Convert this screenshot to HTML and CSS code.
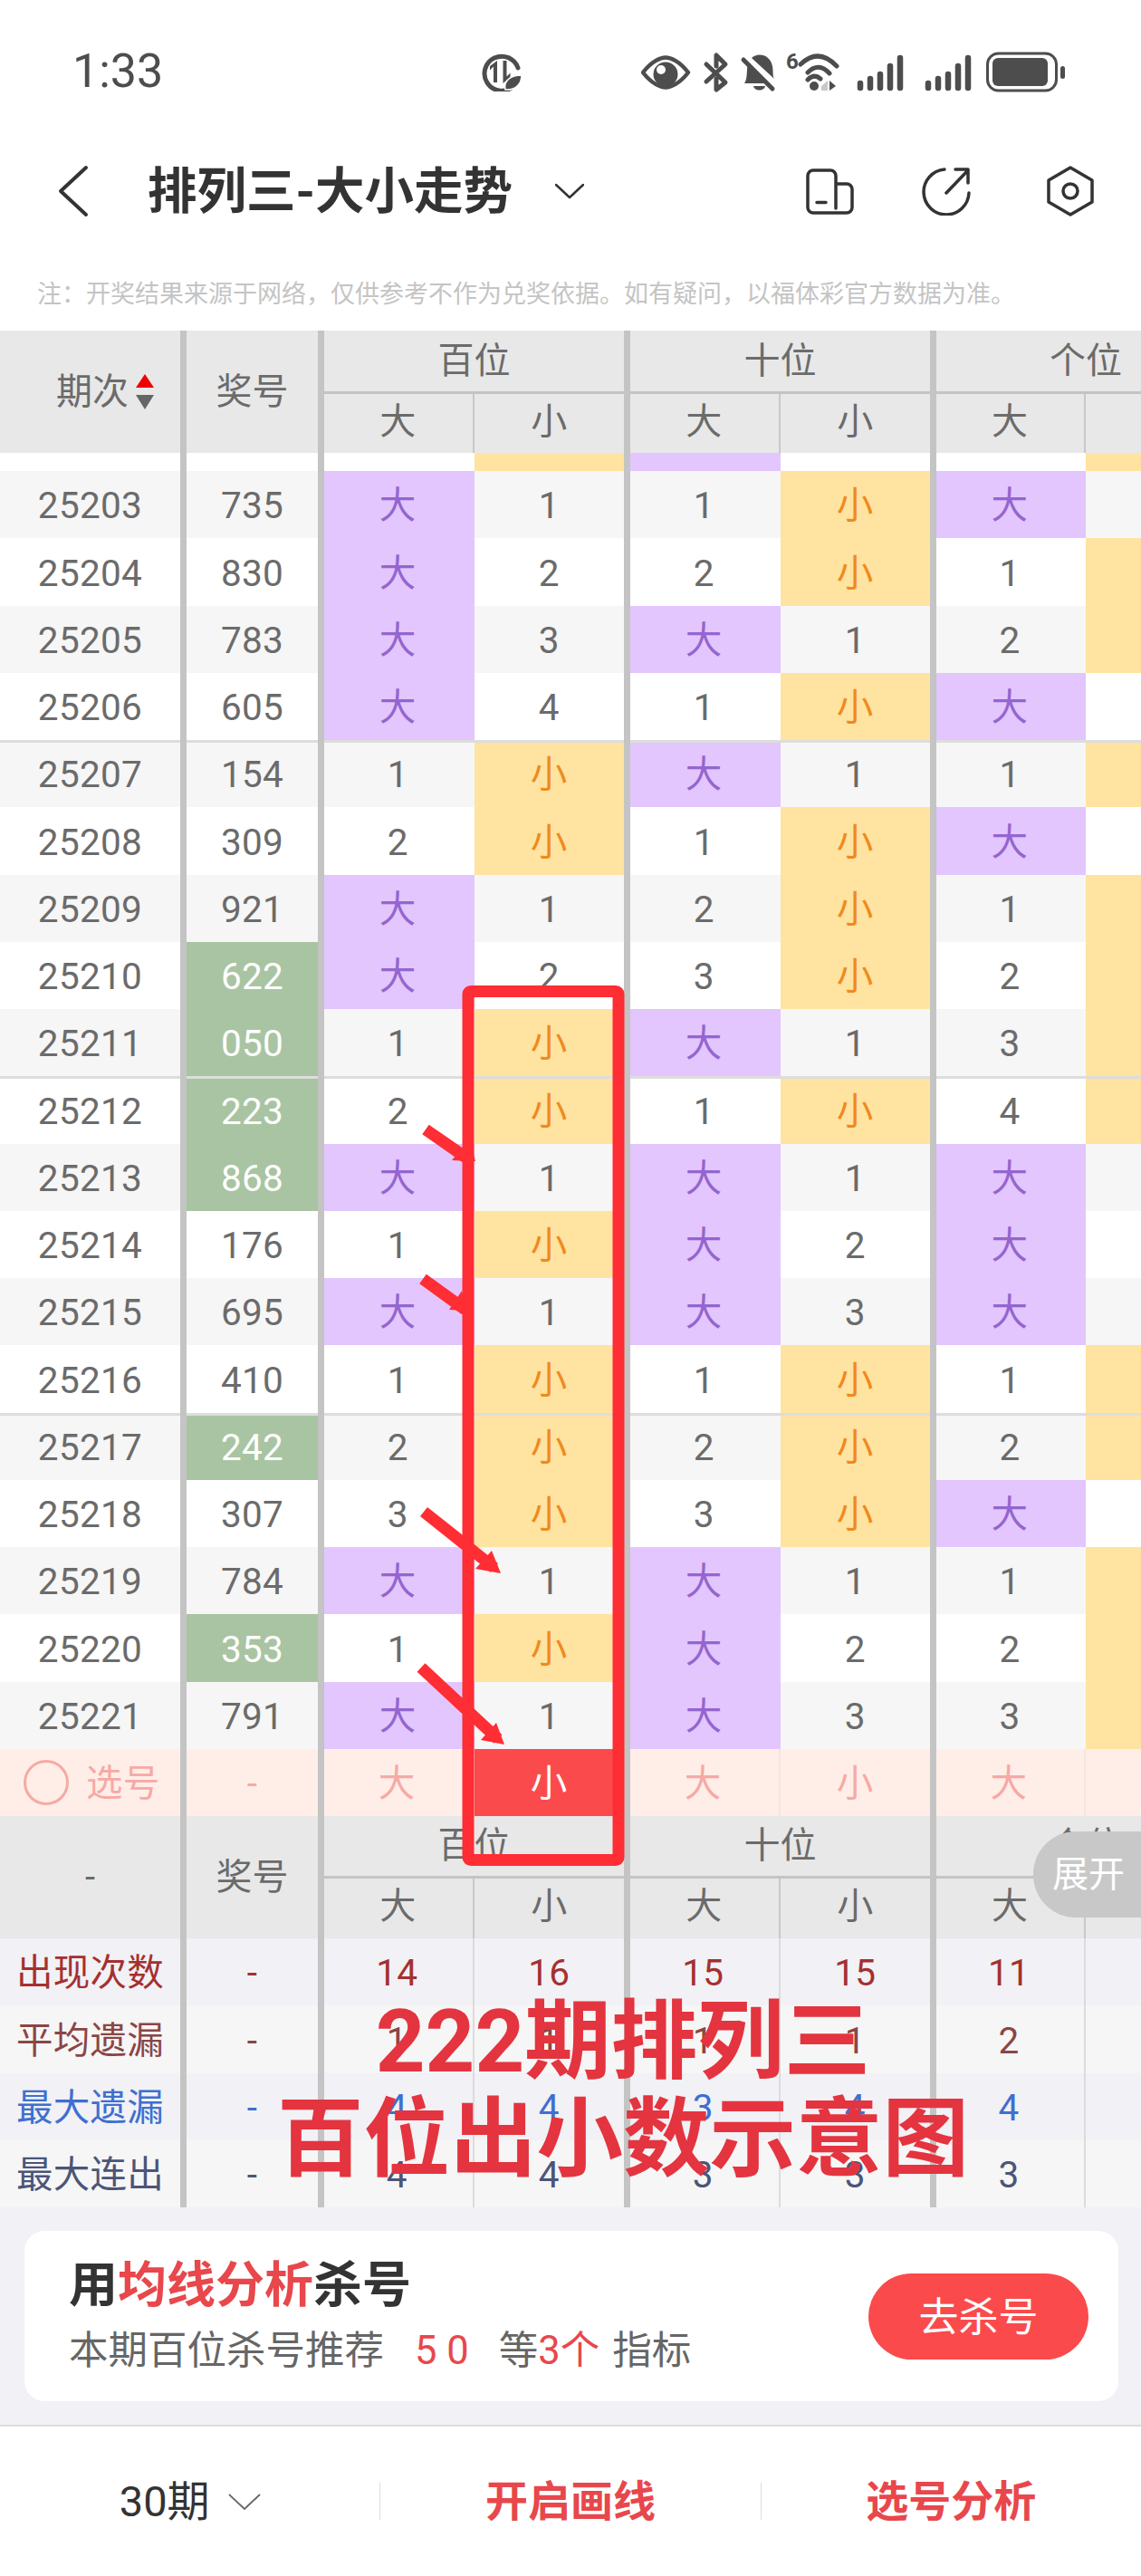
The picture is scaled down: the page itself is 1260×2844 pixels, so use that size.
FILE: index.html
```html
<!DOCTYPE html>
<html lang="zh-CN">
<head>
<meta charset="utf-8">
<title>排列三-大小走势</title>
<link rel="stylesheet" href="styles.css">
</head>
<body>
<div class="page">
  <div class="status">
    <span class="time">1:33</span>
    <svg class="saver" viewBox="530 56 45 44" width="45" height="44">
      <path class="st" d="M564 95 A19 19 0 1 1 570 74" />
      <path class="fl" d="M547 66V90H543V72.5L539 76.5V72ZM553.5 66H557.5V83.5L561.5 79.5V84L553.5 91Z"/>
      <path class="fl leaf" d="M556 98C554 88 562 82 574 82C574 92 567 99 556 98Z"/>
    </svg>
    <svg class="cluster" viewBox="708 52 470 50" width="470" height="50">
      <path class="st thin" d="M710 78C720 65 730 61.500 735 61.500C740 61.500 750 65 760 78C750 91 740 94.500 735 94.500C730 94.500 720 91 710 78Z"/>
      <circle class="fl" cx="735" cy="80" r="13.500"/>
      <circle cx="730" cy="75" r="5" fill="#fff"/>
      <path class="st" d="M780 69L801 89L791 97V85M780 88L801 69L791 59V71"/>
      <path class="fl" d="M822 90C826 85 824 74 826 69L848 90ZM830 62C836 56 850 57 853 71C854 77 853 82 855 85Z"/>
      <path class="fl" d="M832 93H845C844 99 833 99 832 93Z"/>
      <path class="st" d="M821 64L853 96"/>
      <text class="six" x="868" y="74">6</text>
      <path class="st" d="M884 69Q904 50 924 71M892 78Q904 66 916 79M892 86Q899 79 906 85"/>
      <circle class="fl" cx="899" cy="93" r="5"/>
      <path d="M907 93L914 87V98H907Z" fill="#c9c9c9"/>
      <path class="fl" d="M916 87L923 93L916 98Z"/>
      <path class="bars" d="M950 90V95M961 85V95M972 80V95M983 71V95M994 62V95M1025 90V95M1036 85V95M1047 80V95M1058 71V95M1069 62V95"/>
      <rect x="1090.500" y="57" width="76" height="41" rx="12" fill="none" stroke="#4d4d4d" stroke-width="3"/>
      <rect class="fl" x="1096" y="62" width="61" height="31" rx="6"/>
      <rect class="fl" x="1171" y="71" width="5" height="14" rx="2.500"/>
    </svg>
  </div>

  <div class="nav">
    <svg class="back" viewBox="0 0 34 58" width="34" height="58"><path d="M31 3L3 29L31 55"/></svg>
    <h1 class="title">排列三-大小走势</h1>
    <svg class="drop" viewBox="0 0 32 18" width="32" height="18"><path d="M1 2L16 16L31 2"/></svg>
    <svg class="tool tool-device" viewBox="890 186 54 53" width="54" height="53">
      <path d="M923 231V195A6 6 0 0 0 917 189H898A6 6 0 0 0 892 195V230A6 6 0 0 0 898 236H935A6 6 0 0 0 941 230V210A6 6 0 0 0 935 204H923M902 224.500H912"/>
    </svg>
    <svg class="tool tool-share" viewBox="1018 185 54 54" width="54" height="54">
      <path d="M1043 188A25 25 0 1 0 1070 214M1045 214L1069 189M1055 188H1069V203"/>
    </svg>
    <svg class="tool tool-hex" viewBox="1155 184 54 56" width="54" height="56">
      <path d="M1182 186L1206 200V224L1182 238L1158 224V200Z"/><circle cx="1182" cy="212" r="8"/>
    </svg>
  </div>

  <p class="note">注：开奖结果来源于网络，仅供参考不作为兑奖依据。如有疑问，以福体彩官方数据为准。</p>

  <div class="table">
    <div class="thead head-top">
      <div class="th span sort-head"><span>期次</span>
        <svg class="sort" viewBox="0 0 20 40" width="20" height="40"><path d="M10 0L20 15H0Z" fill="#f00000"/><path d="M0 23H20L10 39Z" fill="#666"/></svg>
      </div>
      <div class="th span thick">奖号</div>
      <div class="th group">百位</div>
      <div class="th group">十位</div>
      <div class="th group">个位</div>
      <div class="th sub-b">大</div><div class="th sub-s"><span>小</span></div>
      <div class="th sub-b">大</div><div class="th sub-s">小</div>
      <div class="th sub-b">大</div><div class="th sub-s"></div>
    </div>

    <div class="tbody">
      <div class="row cut"><div></div><div></div><div></div><div class="s"></div><div class="b"></div><div></div><div></div><div class="s"></div></div>
      <div class="row"><div>25203</div><div>735</div><div class="b">大</div><div>1</div><div>1</div><div class="s">小</div><div class="b">大</div><div></div></div>
      <div class="row"><div>25204</div><div>830</div><div class="b">大</div><div>2</div><div>2</div><div class="s">小</div><div>1</div><div class="s"></div></div>
      <div class="row"><div>25205</div><div>783</div><div class="b">大</div><div>3</div><div class="b">大</div><div>1</div><div>2</div><div class="s"></div></div>
      <div class="row"><div>25206</div><div>605</div><div class="b">大</div><div>4</div><div>1</div><div class="s">小</div><div class="b">大</div><div></div></div>
      <div class="row line"><div>25207</div><div>154</div><div>1</div><div class="s">小</div><div class="b">大</div><div>1</div><div>1</div><div class="s"></div></div>
      <div class="row"><div>25208</div><div>309</div><div>2</div><div class="s">小</div><div>1</div><div class="s">小</div><div class="b">大</div><div></div></div>
      <div class="row"><div>25209</div><div>921</div><div class="b">大</div><div>1</div><div>2</div><div class="s">小</div><div>1</div><div class="s"></div></div>
      <div class="row"><div>25210</div><div class="g">622</div><div class="b">大</div><div>2</div><div>3</div><div class="s">小</div><div>2</div><div class="s"></div></div>
      <div class="row"><div>25211</div><div class="g">050</div><div>1</div><div class="s">小</div><div class="b">大</div><div>1</div><div>3</div><div class="s"></div></div>
      <div class="row line"><div>25212</div><div class="g">223</div><div>2</div><div class="s">小</div><div>1</div><div class="s">小</div><div>4</div><div class="s"></div></div>
      <div class="row"><div>25213</div><div class="g">868</div><div class="b">大</div><div>1</div><div class="b">大</div><div>1</div><div class="b">大</div><div></div></div>
      <div class="row"><div>25214</div><div>176</div><div>1</div><div class="s">小</div><div class="b">大</div><div>2</div><div class="b">大</div><div></div></div>
      <div class="row"><div>25215</div><div>695</div><div class="b">大</div><div>1</div><div class="b">大</div><div>3</div><div class="b">大</div><div></div></div>
      <div class="row"><div>25216</div><div>410</div><div>1</div><div class="s">小</div><div>1</div><div class="s">小</div><div>1</div><div class="s"></div></div>
      <div class="row line"><div>25217</div><div class="g">242</div><div>2</div><div class="s">小</div><div>2</div><div class="s">小</div><div>2</div><div class="s"></div></div>
      <div class="row"><div>25218</div><div>307</div><div>3</div><div class="s">小</div><div>3</div><div class="s">小</div><div class="b">大</div><div></div></div>
      <div class="row"><div>25219</div><div>784</div><div class="b">大</div><div>1</div><div class="b">大</div><div>1</div><div>1</div><div class="s"></div></div>
      <div class="row"><div>25220</div><div class="g">353</div><div>1</div><div class="s">小</div><div class="b">大</div><div>2</div><div>2</div><div class="s"></div></div>
      <div class="row"><div>25221</div><div>791</div><div class="b">大</div><div>1</div><div class="b">大</div><div>3</div><div>3</div><div class="s"></div></div>
    </div>

    <div class="row pick">
      <div class="pick-label"><i class="ring"></i><span>选号</span></div>
      <div>-</div><div>大</div><div class="on">小</div><div>大</div><div>小</div><div>大</div><div></div>
    </div>

    <div class="thead head-end">
      <div class="th span thick">-</div>
      <div class="th span thick">奖号</div>
      <div class="th group">百位</div>
      <div class="th group">十位</div>
      <div class="th group">个位</div>
      <div class="th sub-b">大</div><div class="th sub-s">小</div>
      <div class="th sub-b">大</div><div class="th sub-s">小</div>
      <div class="th sub-b">大</div><div class="th sub-s"></div>
      <div class="expand">展开</div>
    </div>

    <div class="stats">
      <div class="row stat c1"><div>出现次数</div><div>-</div><div>14</div><div>16</div><div>15</div><div>15</div><div>11</div><div></div></div>
      <div class="row stat c2"><div>平均遗漏</div><div>-</div><div>1</div><div>1</div><div>1</div><div>1</div><div>2</div><div></div></div>
      <div class="row stat c3"><div>最大遗漏</div><div>-</div><div>4</div><div>4</div><div>3</div><div>4</div><div>4</div><div></div></div>
      <div class="row stat c4"><div>最大连出</div><div>-</div><div>4</div><div>4</div><div>3</div><div>3</div><div>3</div><div></div></div>
    </div>
  </div>

  <div class="promo">
    <div class="card">
      <div class="card-text">
        <div class="card-title">用<em>均线分析</em>杀号</div>
        <div class="card-sub">本期百位杀号推荐<em class="nums">5 0</em><span class="etc">等</span><em>3个</em><span class="ind">指标</span></div>
      </div>
      <button class="go">去杀号</button>
    </div>
  </div>

  <div class="foot">
    <div class="foot-item range">30期<svg viewBox="0 0 36 20" width="36" height="20"><path d="M1 2L18 18L35 2"/></svg></div>
    <div class="foot-item act">开启画线</div>
    <div class="foot-item act">选号分析</div>
  </div>

  <svg class="marks" viewBox="0 0 1260 2844" width="1260" height="2844">
    <rect class="box" x="517" y="1094.500" width="166" height="959" rx="3"/>
    <path class="shaft" d="M470 1247L519 1281M467 1412L514 1446M468 1669L546 1731M465 1841L550 1920"/>
    <path class="head" d="M518 1258L525 1282L499 1281ZM510 1425L515 1447L496 1446ZM543 1712L553 1737L525 1732ZM548 1902L557 1926L531 1921Z"/>
  </svg>
  <div class="poster">222期排列三<br>百位出小数示意图</div>
</div>
</body>
</html>
```

FILE: styles.css
```css
* { box-sizing: border-box; }
html, body { margin: 0; padding: 0; background: #fff; }
body { font-family: Roboto, "Noto Sans CJK SC", sans-serif; }
.page { position: relative; width: 1260px; height: 2844px; overflow: hidden; background: #fff; }
em { font-style: normal; }

/* status bar */
.status { display: flex; align-items: center; height: 158px; padding: 0 82px 0 80px; }
.time { flex: 0 0 450px; font-size: 52px; color: #4d4d4d; line-height: 1; }
.saver { flex: none; margin-left: 2px; }
.cluster { flex: none; margin-left: auto; }
.st { fill: none; stroke: #4d4d4d; stroke-width: 5; stroke-linecap: round; stroke-linejoin: round; }
.st.thin { stroke-width: 4.5; }
.fl { fill: #4d4d4d; }
.leaf { stroke: #fff; stroke-width: 1.5; }
.bars { fill: none; stroke: #4d4d4d; stroke-width: 6.5; stroke-linecap: round; }
.six { font-size: 24px; font-weight: 700; fill: #4d4d4d; }

/* title bar */
.nav { display: flex; align-items: center; height: 106px; padding-left: 64px; }
.back path, .drop path { fill: none; stroke: #333; stroke-linecap: round; stroke-linejoin: round; }
.back { flex: none; }
.back path { stroke-width: 4; }
.title { margin: 0 0 0 65px; font-size: 54.500px; font-weight: 700; color: #333; line-height: 1; white-space: nowrap; }
.drop { flex: none; margin-left: 47px; }
.drop path { stroke-width: 2.5; }
.tool { flex: none; }
.tool path, .tool circle { fill: none; stroke: #333; stroke-width: 3.5; stroke-linecap: round; stroke-linejoin: round; }
.tool-device { margin-left: auto; }
.tool-share { margin-left: 74px; }
.tool-hex { margin-left: 83px; margin-right: 51px; }

.note { margin: 0; height: 101px; padding: 44px 0 0 41px; font-size: 27px; line-height: 34px; color: #c4c4c4; white-space: nowrap; }

/* table */
.table { width: 1260px; overflow: hidden; font-size: 40px; color: #6b6b6b; }
.thead, .row { display: grid; width: 1371px; grid-template-columns: 206px 152px 165.500px 172.500px 165.500px 172.500px 165px 172px; }
.thead { position: relative; background: #e8e8e8; }
.head-top { grid-template-rows: 70px 65px; }
.head-end { grid-template-rows: 69px 66px; }
.th { display: flex; align-items: center; justify-content: center; line-height: 1; }
.span { grid-row: span 2; border-right: 7px solid #c4c4c4; }
.sort-head { justify-content: flex-start; padding-left: 62px; gap: 8px; }
.sort { flex: none; }
.group { grid-column: span 2; border-right: 7px solid #c4c4c4; border-bottom: 3px solid #c4c4c4; }
.sub-b { border-right: 2px solid #c8c8c8; padding: 0 1px 4px 0; }
.sub-s { border-right: 7px solid #c4c4c4; padding-bottom: 4px; }

.row { height: 74.250px; background: #fff; line-height: 1; font-size: 40.500px; letter-spacing: 0.300px; }
.row > div { display: flex; align-items: center; justify-content: center; padding-top: 3px; }
.row > div:nth-child(1), .row > div:nth-child(2), .row > div:nth-child(4), .row > div:nth-child(6), .row > div:nth-child(8) { border-right: 7px solid #c4c4c4; }
.row > div:nth-child(3), .row > div:nth-child(5), .row > div:nth-child(7) { padding-right: 3px; }
.tbody .row:nth-child(even) { background: #f6f6f6; }
.row.cut { height: 20px; }
.row.line > div { box-shadow: inset 0 3px 0 #dddddd; }
.b { background: #e2c6fd; color: #9465cf; }
.s { background: #ffe3a0; color: #ef8a1e; }
.g { background: #a9c4a2; color: #fff; }

.pick { background: #ffeee8; color: #f7a9a5; }
.pick-label { gap: 19px; justify-content: flex-start !important; padding: 0 0 0 26px !important; }
.pick-label span { padding-top: 3px; }
.ring { width: 50px; height: 50px; border: 3px solid #f7a9a5; border-radius: 50%; flex: none; }
.row.pick > div:nth-child(3), .row.pick > div:nth-child(5), .row.pick > div:nth-child(7) { border-right: 2px solid #f3e6e1; }
.row.pick .on { background: #fb4a4c; color: #fff; }

.expand { position: absolute; top: 17px; left: 1141px; width: 130px; height: 95px; padding-left: 21px; border-radius: 47px 0 0 47px; background: #c8c8c8; color: #fff; display: flex; align-items: center; line-height: 1; }

.stat { background: #f6f6f6; }
.stat:nth-child(odd) { background: #f1f1f6; }
.row.stat > div:nth-child(3), .row.stat > div:nth-child(5), .row.stat > div:nth-child(7) { border-right: 2px solid #dcdcdc; }
.c1 { color: #a5302f; }
.c2 { color: #8b4545; }
.c3 { color: #3f6fcf; }
.c4 { color: #4b5578; }

/* promo */
.promo { height: 242px; padding: 26px 25px 0 27px; background: #f1f1f6; border-bottom: 2px solid #dddddd; }
.card { display: flex; align-items: center; justify-content: space-between; height: 188px; padding: 0 33px 0 49px; background: #fff; border-radius: 22px; }
.card-text { display: flex; flex-direction: column; gap: 12px; padding-top: 6px; }
.card-title { font-size: 54px; line-height: 60px; font-weight: 700; color: #333; }
.card-title em { color: #e8474c; }
.card-sub { font-size: 43.500px; line-height: 60px; color: #666; white-space: nowrap; }
.card-sub em { color: #e8474c; }
.nums { margin-left: 34px; }
.etc { margin-left: 33px; }
.ind { margin-left: 14px; }
.go { flex: none; width: 243px; height: 95px; padding: 4px 0 0; border: 0; border-radius: 48px; background: #fb4a4c; color: #fff; font: 44px/1 Roboto, "Noto Sans CJK SC", sans-serif; }

/* footer */
.foot { display: flex; align-items: center; height: 165px; }
.foot-item { flex: 1; display: flex; align-items: center; justify-content: center; height: 41px; line-height: 1; font-size: 47px; }
.foot-item + .foot-item { border-left: 1px solid #dddddd; }
.range { color: #333; gap: 20px; }
.range svg { flex: none; }
.range path { fill: none; stroke: #666; stroke-width: 1.800; }
.act { color: #e8474c; font-weight: 700; }

/* hand-drawn annotation over the screenshot */
.marks { position: absolute; left: 0; top: 0; pointer-events: none; }
.box { fill: none; stroke: #ff2d34; stroke-width: 13; }
.shaft { fill: none; stroke: #ff2d34; stroke-width: 13; }
.head { fill: #ff2d34; }
.poster { position: absolute; left: 188px; top: 2200px; width: 1000px; text-align: center; font-size: 95.500px; line-height: 108px; font-weight: 700; color: #e4343f; white-space: nowrap; }
```
